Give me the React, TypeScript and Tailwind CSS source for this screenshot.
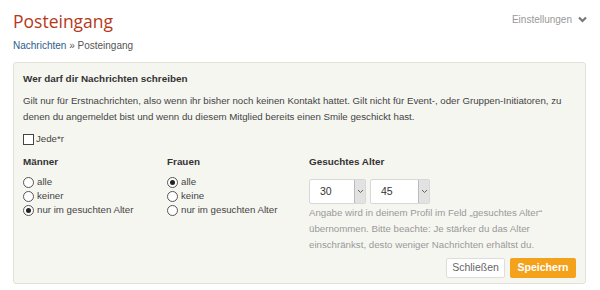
import React from 'react';

function Radio({ checked, label }: { checked?: boolean; label: string }) {
  return (
    <label className="flex items-center gap-[3px] h-[14px]">
      <span className="w-[11px] h-[11px] rounded-full border border-[#555] bg-white flex items-center justify-center">
        {checked && <span className="w-[5px] h-[5px] rounded-full bg-[#222]" />}
      </span>
      <span>{label}</span>
    </label>
  );
}

function Select({ value, w }: { value: string; w: string }) {
  return (
    <div className="flex h-[25px] bg-white border border-[#d8d8d8] rounded-[2px]">
      <span className={`${w} pl-[10px] flex items-center text-[#333] text-[10.5px]`}>{value}</span>
      <span className="w-[11px] bg-[#e2e2e2] border-l border-[#bbb] flex items-center justify-center">
        <svg width="7" height="5" viewBox="0 0 7 5"><path d="M1 1l2.5 2.5L6 1" fill="none" stroke="#666" strokeWidth="1" /></svg>
      </span>
    </div>
  );
}

export default function App() {
  return (
    <main className="w-[600px] h-[290px] bg-white font-['Liberation_Sans',Arial,sans-serif] text-[9.7px] text-[#444]">
      <div className="flex justify-between px-[13px] pt-[8px]">
        <h1 className="font-['Open_Sans',sans-serif] text-[17.5px] leading-[26px] text-[#b5391a]">Posteingang</h1>
        <div className="flex items-center gap-[6px] text-[#999] text-[10px] h-[16px] mt-[3px]">
          Einstellungen
          <svg width="9" height="7" viewBox="0 0 9 7"><path d="M1 1.5l3.5 3.5L8 1.5" fill="none" stroke="#777" strokeWidth="2.2" /></svg>
        </div>
      </div>
      <div className="px-[13px] mt-[5px] leading-[14px] text-[10px]">
        <span className="text-[#2b5c8c]">Nachrichten</span>
        <span className="text-[#555]"> » Posteingang</span>
      </div>

      <section className="mx-[13px] mt-[9px] w-[573px] h-[222px] bg-[#f6f6f1] border border-[#e2e2da] rounded-[3px] px-[9px] pt-[8px]">
        <h2 className="font-bold text-[#333] leading-[16px] text-[9.9px]">Wer darf dir Nachrichten schreiben</h2>
        <p className="mt-[6px] leading-[16px] text-[#444]">
          Gilt nur für Erstnachrichten, also wenn ihr bisher noch keinen Kontakt hattet. Gilt nicht für Event-, oder Gruppen-Initiatoren, zu denen du angemeldet bist und wenn du diesem Mitglied bereits einen Smile geschickt hast.
        </p>
        <label className="mt-[7px] flex items-center gap-[2px] h-[14px]">
          <span className="w-[11px] h-[11px] border border-[#444] bg-white" />
          <span>Jede*r</span>
        </label>

        <div className="flex mt-[8px]">
          <div className="w-[144px]">
            <h3 className="font-bold text-[#333] leading-[16px] text-[9.9px]">Männer</h3>
            <div className="mt-[5px] flex flex-col">
              <Radio label="alle" />
              <Radio label="keiner" />
              <Radio label="nur im gesuchten Alter" checked />
            </div>
          </div>
          <div className="w-[142px]">
            <h3 className="font-bold text-[#333] leading-[16px] text-[9.9px]">Frauen</h3>
            <div className="mt-[5px] flex flex-col">
              <Radio label="alle" checked />
              <Radio label="keine" />
              <Radio label="nur im gesuchten Alter" />
            </div>
          </div>
          <div className="w-[245px]">
            <h3 className="font-bold text-[#333] leading-[16px] text-[9.9px]">Gesuchtes Alter</h3>
            <div className="mt-[9px] flex gap-[4px]">
              <Select value="30" w="w-[44px]" />
              <Select value="45" w="w-[47px]" />
            </div>
            <p className="text-[#999] leading-[16px] mt-[1px]">
              Angabe wird in deinem Profil im Feld „gesuchtes Alter“ übernommen. Bitte beachte: Je stärker du das Alter einschränkst, desto weniger Nachrichten erhältst du.
            </p>
          </div>
        </div>

        <div className="flex justify-end gap-[5px] mt-[5px]">
          <button className="h-[20px] w-[59px] bg-white border border-[#ddd] rounded-[2px] text-[#666] text-[10.5px]">Schließen</button>
          <button className="h-[20px] w-[66px] bg-[#f4a21c] rounded-[2px] text-white font-bold text-[10.5px]">Speichern</button>
        </div>
      </section>
    </main>
  );
}
